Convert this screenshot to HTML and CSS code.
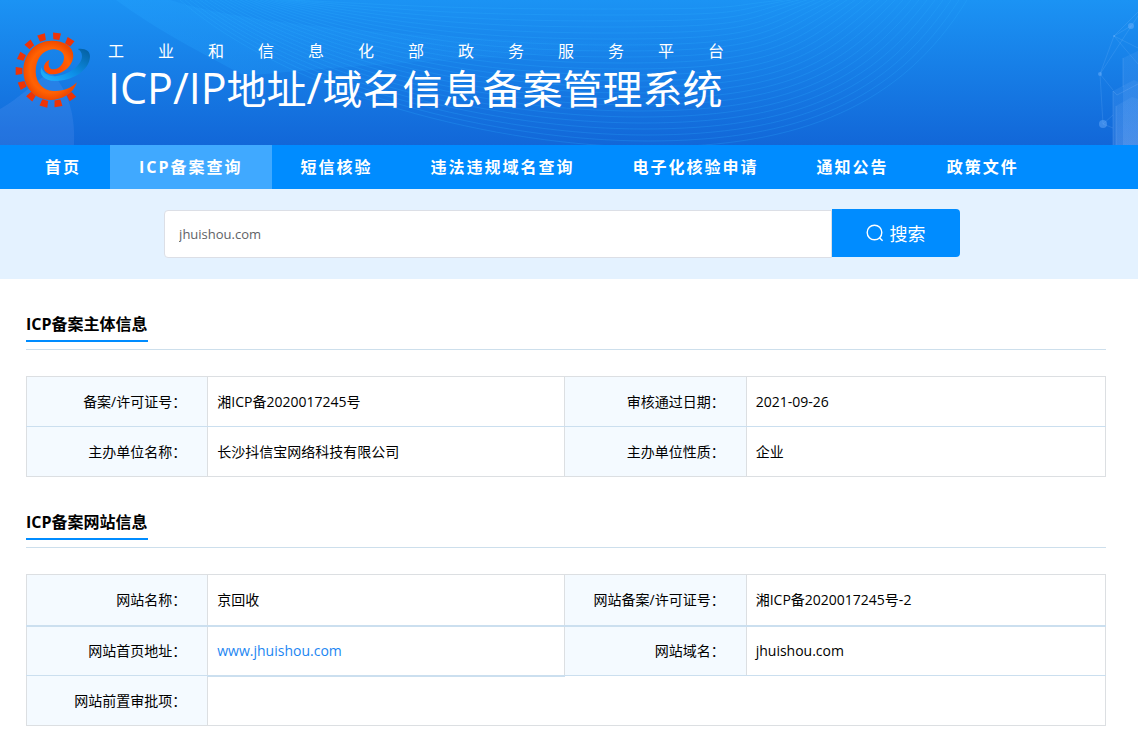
FILE: index.html
```html
<!DOCTYPE html>
<html lang="zh-CN">
<head>
<meta charset="utf-8">
<title>ICP/IP地址/域名信息备案管理系统</title>
<link rel="stylesheet" href="styles.css">
</head>
<body>
<header class="banner">
  <svg class="banner-art" viewBox="0 0 1138 145" preserveAspectRatio="xMidYMin slice" aria-hidden="true">
    <defs>
      <linearGradient id="beam" x1="0" y1="0" x2="1" y2="0">
        <stop offset="0" stop-color="#25a5ff" stop-opacity=".3"/>
        <stop offset="1" stop-color="#25a5ff" stop-opacity="0"/>
      </linearGradient>
      <linearGradient id="tower" x1="0" y1="0" x2="0" y2="1">
        <stop offset="0" stop-color="#8fc0ff" stop-opacity=".1"/>
        <stop offset="1" stop-color="#8fc0ff" stop-opacity=".18"/>
      </linearGradient>
    </defs>
    <path d="M0 109C20 98 32 84 50 72C66 86 76 112 74 145H0Z" fill="#8fb4ff" fill-opacity=".14"/>
    <path d="M116 0C160 32 200 52 245 76C400 60 560 56 700 42C500 44 260 30 170 0Z" fill="url(#beam)"/>
    <g id="waves" fill="none" stroke="#2fb0ff"></g>
    <g stroke="#8fc4ff" stroke-opacity=".16" fill="none">
      <path d="M1138 12L1114 36L1100 74L1103 124L1113 115M1114 36L1131 26M1114 36L1138 48M1114 36L1138 64M1100 74L1130 28L1138 16M1100 74L1113 90M1103 124L1113 128"/>
    </g>
    <g fill="#7db8ff" fill-opacity=".4">
      <circle cx="1114" cy="36" r="1"/><circle cx="1131" cy="26" r="3"/><circle cx="1100" cy="74" r="2"/><circle cx="1103" cy="124" r="4"/>
    </g>
    <g fill="url(#tower)">
      <path d="M1123 58L1138 51V145H1123Z"/>
      <path d="M1113 91L1134 80L1138 82V145H1113Z"/>
      <path d="M1116 106L1132 97L1138 99V145H1116Z"/>
    </g>
    <path d="M1113 91V145M1116 106V145M1123 58V87M1113 91L1117 95L1138 84" fill="none" stroke="#9cc8ff" stroke-opacity=".18"/>
  </svg>
  <svg class="logo" viewBox="46 36 226 228" role="img" aria-label="工业和信息化部">
    <defs>
      <radialGradient id="body"><stop offset=".3" stop-color="#ff4a00"/><stop offset=".75" stop-color="#ff6203"/><stop offset="1" stop-color="#f04a00"/></radialGradient>
      <linearGradient id="swoosh" x1="0" y1="1" x2="1" y2="0"><stop offset="0" stop-color="#22b4ff"/><stop offset=".45" stop-color="#0d8fe8"/><stop offset="1" stop-color="#045d9e"/></linearGradient>
    </defs>
    <g fill="#ee3306">
      <path d="M-12 -10H12L9 10H-9Z" transform="translate(208 66) rotate(32)"/>
      <path d="M-12 -10H12L9 10H-9Z" transform="translate(170 49) rotate(6)"/>
      <path d="M-12 -10H12L9 10H-9Z" transform="translate(126 53) rotate(-16)"/>
      <path d="M-12 -10H12L9 10H-9Z" transform="translate(89 74) rotate(-40)"/>
      <path d="M-12 -10H12L9 10H-9Z" transform="translate(65 110) rotate(-65)"/>
      <path d="M-12 -10H12L9 10H-9Z" transform="translate(57 153) rotate(-90)"/>
      <path d="M-12 -10H12L9 10H-9Z" transform="translate(67 195) rotate(-112)"/>
      <path d="M-12 -10H12L9 10H-9Z" transform="translate(94 229) rotate(-140)"/>
      <path d="M-12 -10H12L9 10H-9Z" transform="translate(133 250) rotate(-164)"/>
      <path d="M-12 -10H12L9 10H-9Z" transform="translate(174 250) rotate(172)"/>
      <path d="M-12 -10H12L9 10H-9Z" transform="translate(213 229) rotate(145)"/>
    </g>
    <path fill="url(#swoosh)" d="M233 87C255 84 270 92 270 110C268 152 215 183 165 183C132 183 116 164 124 142C130 162 148 171 170 168C212 162 246 134 246 108C245 96 240 90 233 87Z"/>
    <path fill="url(#body)" d="M231 187C220 222 185 240 150 240C100 237 70 200 70 150C72 98 108 62 155 62C195 62 220 80 220 108C218 140 187 163 158 163C140 163 129 151 132 138C135 128 142 122 149 119C141 135 148 149 162 148C180 146 193 128 192 110C190 95 176 88 158 88C126 90 107 120 107 155C108 190 130 211 160 213C190 215 215 204 231 187Z"/>
  </svg>
  <div class="banner-text">
    <p class="subtitle">工业和信息化部政务服务平台</p>
    <h1 class="title"><span class="latin">ICP/IP</span>地址<span class="latin">/</span>域名信息备案管理系统</h1>
  </div>
</header>
<nav class="nav">
  <a class="nav-item" href="#">首页</a>
  <a class="nav-item active" href="#" aria-current="page">ICP备案查询</a>
  <a class="nav-item" href="#">短信核验</a>
  <a class="nav-item" href="#">违法违规域名查询</a>
  <a class="nav-item" href="#">电子化核验申请</a>
  <a class="nav-item" href="#">通知公告</a>
  <a class="nav-item" href="#">政策文件</a>
</nav>
<div class="search-band">
  <form class="search" action="#">
    <input class="search-input" type="text" value="jhuishou.com" aria-label="搜索内容">
    <button class="search-button" type="submit">
      <svg width="18" height="18" viewBox="0 0 18 18" fill="none" stroke="currentColor" stroke-width="1.4" aria-hidden="true"><circle cx="8.5" cy="8.5" r="7.3"/><path d="M13.5 13.7L16.6 16.8"/></svg>
      <span>搜索</span>
    </button>
  </form>
</div>
<main class="content">
  <section class="section">
    <div class="section-head"><h2 class="section-title">ICP备案主体信息</h2></div>
    <table class="info">
      <colgroup><col class="col-label"><col class="col-value"><col class="col-label"><col></colgroup>
      <tr><th scope="row">备案/许可证号：</th><td>湘ICP备2020017245号</td><th scope="row">审核通过日期：</th><td>2021-09-26</td></tr>
      <tr><th scope="row">主办单位名称：</th><td>长沙抖信宝网络科技有限公司</td><th scope="row">主办单位性质：</th><td>企业</td></tr>
    </table>
  </section>
  <section class="section">
    <div class="section-head"><h2 class="section-title">ICP备案网站信息</h2></div>
    <table class="info">
      <colgroup><col class="col-label"><col class="col-value"><col class="col-label"><col></colgroup>
      <tr class="thick"><th scope="row">网站名称：</th><td>京回收</td><th scope="row">网站备案/许可证号：</th><td>湘ICP备2020017245号-2</td></tr>
      <tr><th scope="row">网站首页地址：</th><td class="thick-cell"><a class="site-link" href="#">www.jhuishou.com</a></td><th scope="row">网站域名：</th><td>jhuishou.com</td></tr>
      <tr><th scope="row">网站前置审批项：</th><td colspan="3"></td></tr>
    </table>
  </section>
</main>
<script src="waves.js"></script>
</body>
</html>
```

FILE: styles.css
```css
* { box-sizing: border-box; }

body {
  margin: 0;
  background: #fff;
  color: #000;
  font-family: "Open Sans", "Noto Sans CJK SC", sans-serif;
  font-size: 14px;
}

.banner {
  position: relative;
  display: flex;
  align-items: flex-start;
  gap: 17px;
  min-height: 145px;
  padding: 32px 15px 0;
  background: linear-gradient(#1b93f4, #1267d8);
  color: #fff;
  overflow: hidden;
}
.banner-art {
  position: absolute;
  inset: 0;
  width: 100%;
  height: 100%;
}
.logo { position: relative; flex: none; width: 76px; height: 76px; }
.banner-text { position: relative; padding-top: 9px; }
.subtitle {
  margin: 0;
  font-size: 16px;
  line-height: 20px;
  letter-spacing: 34px;
}
.title {
  margin: 0;
  font-size: 40px;
  font-weight: 400;
  line-height: 56px;
  white-space: nowrap;
}
.title .latin { font-size: 43px; line-height: 1; }

.nav {
  display: flex;
  padding-left: 16px;
  background: #008cff;
}
.nav-item {
  padding: 0 29px;
  color: #fff;
  font-size: 16px;
  font-weight: 700;
  line-height: 44px;
  letter-spacing: 2px;
  text-decoration: none;
  white-space: nowrap;
}
.nav-item.active { background: #40a9ff; }

.search-band {
  padding: 20px 14px 21px 0;
  background: #e4f2ff;
}
.search {
  display: flex;
  width: calc(70% + 9px);
  margin: 0 auto;
}
.search-input {
  flex: 1;
  min-width: 0;
  height: 48px;
  margin-top: 1px;
  padding: 0 14px;
  border: 1px solid #dcdfe6;
  border-radius: 4px 0 0 4px;
  background: #fff;
  color: #606266;
  font: inherit;
  font-size: 13px;
}
.search-button {
  display: flex;
  align-items: center;
  justify-content: center;
  gap: 5px;
  width: 128px;
  height: 48px;
  padding: 0;
  border: 0;
  border-radius: 0 4px 4px 0;
  background: #008cff;
  color: #fff;
  font: inherit;
  font-size: 18px;
}

.content { padding: 32px 32px 18px 26px; }
.section + .section { margin-top: 32px; }
.section-head {
  display: flex;
  padding-bottom: 7px;
  border-bottom: 1px solid #cddfec;
}
.section-title {
  margin: 0;
  padding: 2px 0 4px;
  border-bottom: 2px solid #008cff;
  font-size: 16px;
  font-weight: 700;
  line-height: 23px;
}
.info {
  width: 100%;
  margin-top: 26px;
  border-collapse: collapse;
  table-layout: fixed;
}
.col-label { width: 16.8%; }
.col-value { width: 33.1%; }
.info th, .info td {
  height: 50px;
  padding: 0 9px;
  border: 1px solid #dcdfe2;
  border-bottom-color: #cbdfef;
  font-weight: 400;
  line-height: 20px;
  text-align: left;
}
.info th {
  padding-right: 21px;
  background: #f4faff;
  text-align: right;
  white-space: nowrap;
}
.info .thick th, .info .thick td { height: 51px; border-bottom: 2px solid #cbdfef; }
.info td.thick-cell { border-bottom-width: 2px; }
.info tr + tr th, .info tr + tr td { border-top-color: #cbdfef; }
.info tr:last-child th, .info tr:last-child td { border-bottom-color: #dcdfe2; }
.site-link { color: #1c86f2; text-decoration: none; }
```

FILE: waves.js
```js
// Fan of nested curves behind the banner title.
const group = document.getElementById("waves");
for (let i = 0; i < 28; i++) {
  const path = document.createElementNS("http://www.w3.org/2000/svg", "path");
  const left = 180 + i * 5;
  const right = 967 - i * 8;
  const low = 147 - i * 6;
  const mid = 650 - i * 2;
  if (low < 4) break;
  path.setAttribute("d",
    `M${left} 0C${left + 110} ${low * 0.65} ${mid - 150} ${low} ${mid} ${low}S${right - 65} ${low * 0.72} ${right} 0`);
  path.setAttribute("stroke-opacity", "0.24");
  group.appendChild(path);
}
```
